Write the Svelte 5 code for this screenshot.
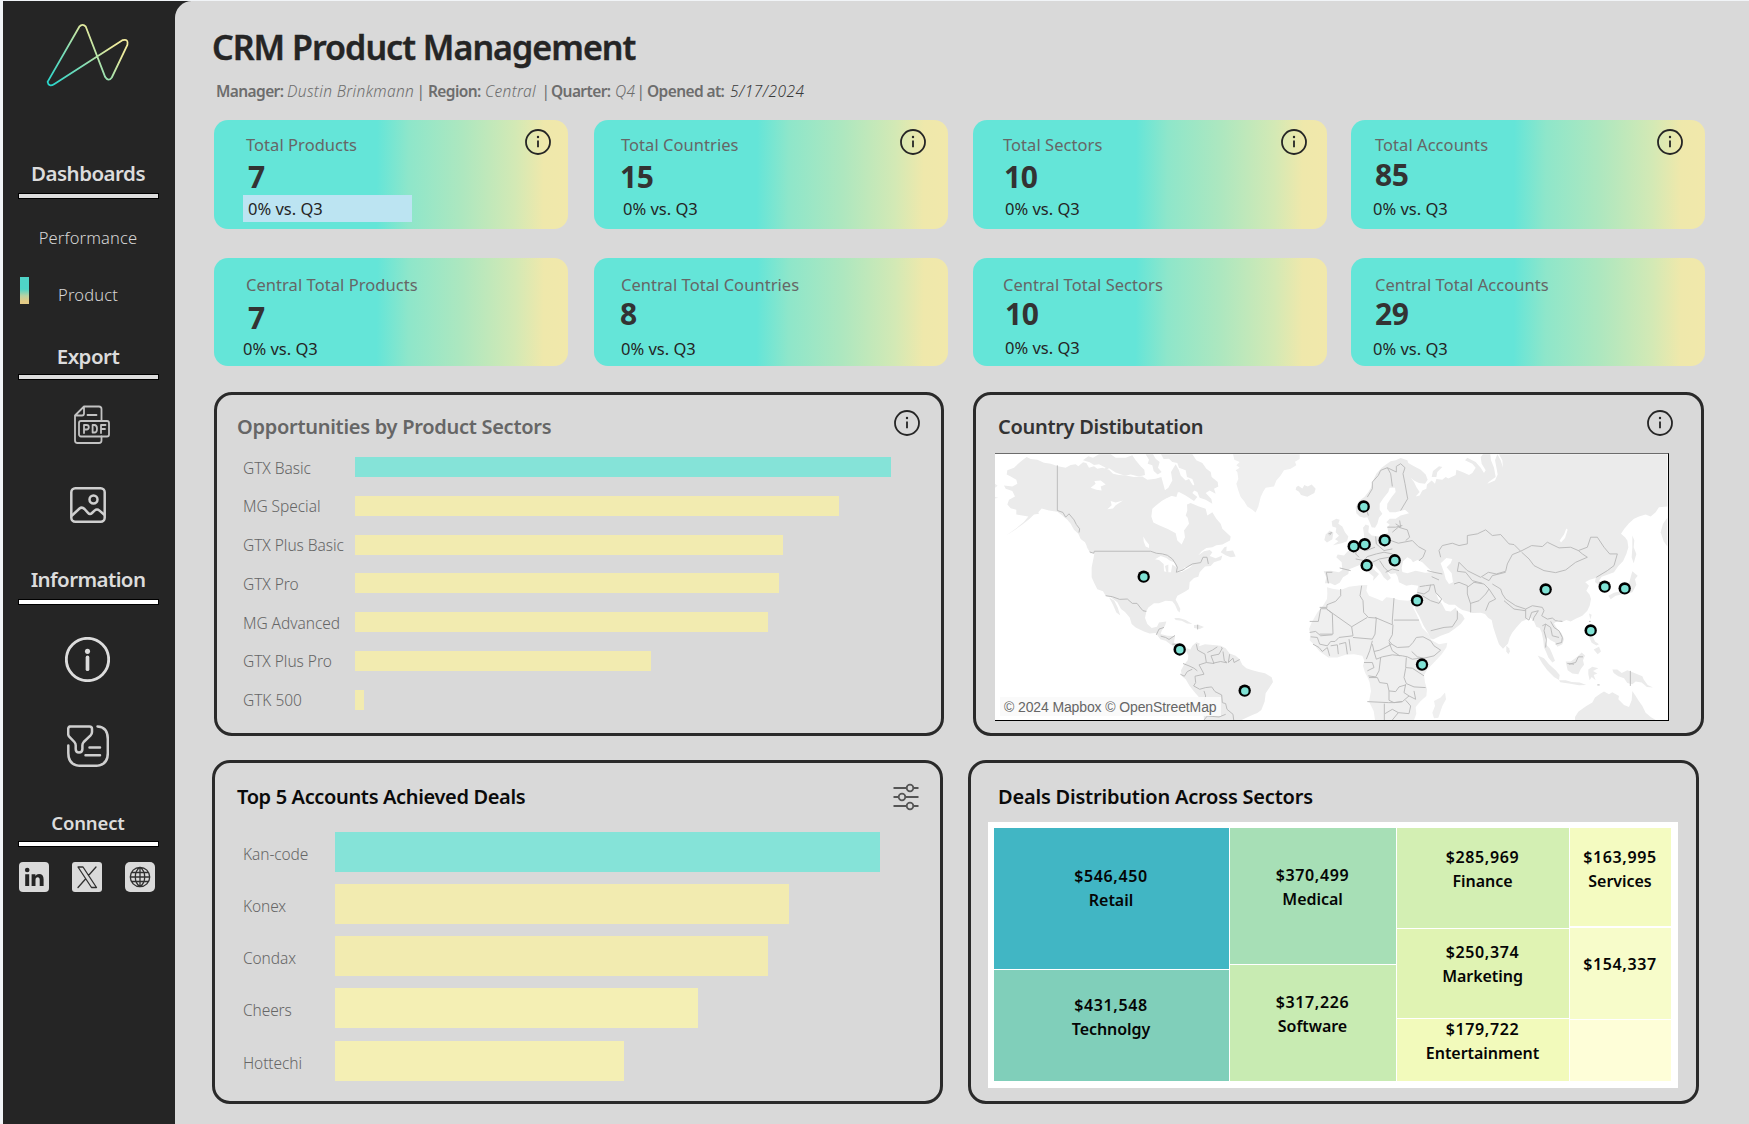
<script>
  const cardRows = [
    [
      { label: 'Total Products', value: '7', picked: true },
      { label: 'Total Countries', value: '15' },
      { label: 'Total Sectors', value: '10' },
      { label: 'Total Accounts', value: '85' }
    ],
    [
      { label: 'Central Total Products', value: '7' },
      { label: 'Central Total Countries', value: '8' },
      { label: 'Central Total Sectors', value: '10' },
      { label: 'Central Total Accounts', value: '29' }
    ]
  ];
  const sectors = [
    ['GTX Basic', 536], ['MG Special', 484], ['GTX Plus Basic', 428], ['GTX Pro', 424],
    ['MG Advanced', 413], ['GTX Plus Pro', 296], ['GTK 500', 9]
  ];
  const accounts = [['Kan-code', 545], ['Konex', 454], ['Condax', 433], ['Cheers', 363], ['Hottechi', 289]];
  const treemap = [
    [{ k: 'retail', v: '$546,450', n: 'Retail' }, { k: 'tech', v: '$431,548', n: 'Technolgy' }],
    [{ k: 'medical', v: '$370,499', n: 'Medical' }, { k: 'software', v: '$317,226', n: 'Software' }],
    [{ k: 'finance', v: '$285,969', n: 'Finance' }, { k: 'marketing', v: '$250,374', n: 'Marketing' }, { k: 'fun', v: '$179,722', n: 'Entertainment' }],
    [{ k: 'services', v: '$163,995', n: 'Services' }, { k: 'other', v: '$154,337', n: '' }, { k: 'rest', v: '', n: '' }]
  ];

  // Map geometry, in the units of the map's viewBox.
  const land = [
    'M145,270L165,262 180,248 190,240 203,230 215,236 235,238 255,247 275,250 297,258 320,262 335,254 350,252 358,258 372,246 382,248 390,262 405,258 415,265 430,262 450,268 462,280 480,284 500,285 525,290 550,288 565,298 590,295 607,290 612,308 618,330 628,322 640,300 636,275 650,252 660,270 665,285 680,300 690,296 700,312 712,322 700,338 715,350 705,362 680,345 660,335 640,345 625,352 608,362 590,376 580,385 577,408 583,426 600,434 628,446 650,458 655,480 668,492 678,470 675,450 690,430 686,412 680,405 685,390 684,372 695,368 720,378 740,385 745,405 760,395 772,415 785,430 790,445 806,460 815,468 813,480 790,492 772,494 760,500 742,502 728,512 718,524 735,512 752,508 760,515 752,526 770,533 790,525 786,538 765,545 755,556 738,558 722,575 718,588 705,592 692,605 690,625 680,632 665,640 655,645 650,657 656,668 664,685 662,695 656,690 648,672 640,662 620,660 600,668 585,668 568,680 562,692 558,712 565,730 578,742 594,738 600,725 622,722 618,735 608,750 605,760 625,765 648,766 645,785 655,800 668,806 684,802 694,806 685,812 672,808 655,812 640,795 620,780 604,775 590,757 572,758 555,752 530,740 518,730 512,710 498,694 486,685 475,665 455,650 440,645 432,632 415,626 406,608 398,590 398,560 403,535 406,520 395,512 385,500 378,485 365,475 358,460 345,448 335,430 325,418 310,405 295,394 270,390 248,384 238,395 240,400 225,402 212,415 190,432 165,450 140,466 170,445 195,424 208,408 190,405 172,402 172,388 155,383 145,372 150,358 168,348 160,332 140,325 135,315 160,318 175,310 172,298 155,288 143,282Z',
    'M450,650L466,660 476,680 484,704 472,695 462,672Z',
    'M372,240L388,228 402,232 420,222 455,222 470,232 500,232 520,225 530,240 545,258 556,268 558,284 540,288 515,282 498,286 470,276 450,264 440,270 448,284 428,274 440,262 420,252 405,254 392,246Z',
    'M560,222L582,222 590,235 602,245 597,262 608,275 596,282 584,272 580,255 566,250 570,238Z',
    'M606,222L700,222 712,240 730,248 742,265 755,275 758,290 776,305 778,318 765,325 770,340 752,330 740,338 757,356 760,370 740,358 722,352 715,335 695,325 706,312 700,296 684,290 680,270 660,262 655,248 640,245 630,235 614,236Z',
    'M616,330L632,322 640,335 656,338 652,350 636,346 625,352Z',
    'M785,515L796,500 803,498 802,512 822,510 830,528 815,530 800,524Z',
    'M382,497L392,505 402,518 394,518Z',
    'M646,712L660,712 680,718 700,730 684,728 668,720 650,718Z',
    'M705,733L718,732 735,739 722,745 705,742Z',
    'M1012,320L1018,316 1030,324 1036,314 1046,318 1058,312 1070,325 1066,338 1045,349 1026,344 1020,334 1010,328Z',
    'M682,812L694,806 700,795 712,784 722,788 720,796 738,790 770,793 785,795 800,802 812,818 830,825 842,835 850,852 862,862 880,868 900,873 918,877 938,889 942,903 930,922 920,937 917,962 907,987 895,996 880,1002 862,1010 848,1017 735,1017 732,980 725,955 705,932 692,915 680,895 668,885 666,868 676,850 686,838 688,825Z'
  ];
  const greenland = 'M822,222L1022,222 1022,236 1008,244 1012,255 995,265 975,270 965,285 952,300 945,318 920,322 912,335 905,350 898,378 890,396 880,388 865,378 855,362 845,350 838,330 832,310 838,296 835,275 830,270 842,262 832,255 842,245 826,238Z';
  const eurasia = [
    'M195,412L182,408 172,398 170,380 180,362 196,350 208,335 217,320 222,300 232,280 248,262 262,252 275,243 290,240 305,233 325,240 328,248 345,258 365,268 380,282 386,298 378,310 360,308 345,300 335,292 345,305 352,320 362,335 350,348 362,345 370,330 382,325 384,312 398,300 408,310 412,296 430,298 440,290 448,294 470,284 472,268 490,275 510,284 520,278 530,262 520,250 498,240 505,232 530,245 545,262 555,278 560,270 548,250 545,230 552,222 574,222 576,240 585,262 590,290 570,304 565,310 588,300 596,282 592,260 588,240 595,222 605,240 612,262 610,240 600,222 1105,222 1105,378 1080,380 1070,395 1055,408 1040,402 1020,408 1005,415 990,428 976,445 966,460 978,470 985,480 988,500 982,520 972,542 958,556 945,575 925,582 908,588 900,600 918,612 925,630 910,634 902,625 898,612 888,604 890,592 872,597 858,605 852,598 870,615 862,630 872,642 876,655 872,675 865,690 850,705 830,714 815,722 802,718 790,724 778,718 765,728 775,745 788,758 795,775 790,790 775,798 768,785 755,778 745,770 738,778 742,792 752,802 758,815 768,840 760,845 748,830 742,815 735,800 733,780 728,755 722,742 712,738 705,722 695,712 685,715 668,722 652,740 640,755 632,770 627,788 612,804 600,790 592,768 583,740 578,718 568,712 558,700 545,696 520,697 508,692 490,688 478,680 468,672 450,672 435,665 425,650 412,640 418,655 428,668 440,690 455,692 470,680 475,692 490,702 497,714 485,730 470,742 450,756 425,765 402,776 394,772 388,758 374,735 360,705 350,688 344,668 352,650 354,630 358,615 338,612 322,615 300,605 296,588 290,578 275,580 265,572 262,560 268,580 276,592 266,600 254,590 245,575 232,560 218,545 207,534 200,538 212,555 230,572 240,580 232,590 222,600 224,588 210,576 198,562 188,550 178,555 160,562 150,566 148,580 132,590 122,606 108,614 95,608 78,608 82,590 74,572 95,570 120,575 130,568 128,545 112,530 116,522 135,525 146,512 158,508 170,495 182,486 196,478 195,462 192,442 200,432 210,436 208,455 218,465 240,468 256,462 268,455 265,440 272,432 262,425 272,415 290,415 305,405 330,398 318,388 290,395 272,395 264,385 265,370 278,350 290,335 288,322 272,322 268,335 252,355 242,370 242,388 250,400 240,412 235,430 228,442 218,440 212,425 205,410Z',
    'M98,422L112,415 122,418 118,430 130,438 138,455 148,468 144,482 128,488 102,494 118,482 108,476 120,466 110,455 112,442 100,438Z',
    'M80,462L92,450 103,456 100,476 84,486 76,478Z',
    'M398,290L402,272 420,258 430,260 415,275 412,290Z',
    'M622,795L630,802 633,812 628,820 622,812Z',
    'M716,824L735,832 750,850 770,868 782,882 780,897 765,888 745,868 730,848Z',
    'M780,898L800,898 818,903 842,905 862,912 840,913 810,908 784,904Z',
    'M800,842L815,842 835,828 848,815 858,824 852,838 855,852 845,865 838,880 820,878 806,868Z',
    'M868,866L880,858 898,862 882,870 895,878 884,882 890,898 878,888 872,898 868,880Z',
    'M940,866L955,866 968,876 985,868 1010,878 1030,886 1034,896 1046,912 1062,920 1044,918 1028,905 1010,902 1000,910 985,906 975,892 958,886 944,876Z',
    'M870,768L882,768 888,782 900,790 892,794 878,786Z',
    'M884,806L900,798 906,812 896,820Z',
    'M870,698L878,702 874,716Z',
    'M1000,572L1016,585 1008,596 1012,612 1000,635 975,640 950,645 935,656 928,645 945,636 965,632 985,618 992,600Z',
    'M1000,465L1006,480 1004,500 1012,520 1004,548 998,530 1000,500Z',
    'M1105,412L1105,498 1094,482 1085,455 1092,430Z',
    'M828,1008L838,992 862,975 880,965 888,950 905,938 915,932 930,940 940,934 960,945 958,955 975,972 990,978 998,958 1000,930 1010,945 1018,958 1030,975 1040,995 1055,1008 1070,1017 828,1017Z'
  ];
  const africa = [
    'M84,620L100,624 125,628 150,618 185,614 205,613 202,630 210,645 235,655 250,662 262,650 280,652 300,658 325,660 345,658 348,672 342,680 352,700 362,722 370,742 388,760 398,778 420,790 445,786 442,800 428,820 405,845 385,865 375,882 378,905 384,925 382,945 365,960 350,978 352,998 345,1017 228,1017 224,990 210,962 216,930 212,905 206,890 198,875 192,855 196,840 190,825 165,820 140,822 115,830 88,830 62,812 48,795 32,778 34,760 30,745 38,725 55,695 72,675 84,655 85,638Z',
    'M438,935L441,955 430,975 418,1010 405,1012 400,995 408,975 405,960 425,950Z'
  ];
  const water = [
    'M395,322L410,310 406,302 425,300 440,312 425,318 428,330 412,328Z',
    'M445,386L458,374 455,362 470,366 492,360 470,374 462,384Z',
    'M553,468L560,480 570,492 570,502 560,498 554,482Z',
    'M588,536L605,526 622,532 632,540 645,545 652,560 640,552 636,575 628,575 628,552 618,556 622,574 615,572 614,550 600,538Z',
    'M650,575L672,568 676,560 700,555 690,562 668,574Z',
    'M1328,562L1332,542 1345,530 1356,536 1362,545 1375,538 1390,545 1405,560 1422,575 1398,576 1370,570 1345,578 1330,574Z',
    'M1445,548L1462,532 1480,535 1475,548 1463,560 1478,578 1482,605 1470,610 1460,595 1455,575Z',
    'M1802,480L1815,462 1822,444 1826,448 1818,472 1806,486Z'
  ];
  const borders = [
    'M295,255V390L312,396 320,410 330,400 345,418 352,432 362,445 360,456',
    'M392,514L404,518 406,512H575L592,518 610,520 625,524 640,535 650,550 655,560 652,575 672,568 680,562 700,550 725,546 732,530 744,530 748,550',
    'M440,645L460,648 482,656 505,655 520,668 534,668 545,682 552,690 562,692',
    'M592,762L600,745 615,740 M605,766L620,770 630,776 648,764 M640,790L655,790 M716,732V746',
    'M712,790L716,808 738,820 742,845 765,848 756,825 780,820 790,802 786,800 M792,812L796,840 804,845 M812,820L808,845 822,832 825,845 842,836 M762,847L785,842 804,846 M742,845L720,852 730,870 735,880 708,886 710,905 704,915 722,925 740,920 758,918 768,932 788,942 790,965 800,968 804,985 822,1000 824,1017 M672,848L690,855 705,862 715,870 M664,880L676,886 685,872 700,865 M735,930L740,945 735,962 M735,1017L745,1005 780,1008 800,1000 M745,815L760,808 775,798',
    'M1082,680H1102 M1145,625V645L1130,662 1104,672 1103,684H1085L1078,722H1052 M1104,686L1178,738 1225,710 M1120,698L1122,760H1082 M1052,755L1070,752 1085,765 1120,762 M1102,684L1120,698 M1178,738L1182,765 1140,770 1128,782 1115,782 1105,795 1082,790 1075,770 1055,768 M1062,790L1080,800 1090,812 1105,800 1112,825 M1115,795L1135,792 1138,820 M1140,790L1160,785 1165,820 M1170,775L1175,810 M1182,770L1240,775 1248,760 1252,712 1228,710 1214,695 1212,660 1203,645 1208,615 M1248,710L1300,732V718L1305,652 M1305,718H1380 M1302,732L1300,762 1290,780 1298,790 1278,800 1262,808 1245,812 1240,790 M1240,780L1232,810 1222,835 M1245,812L1252,835 1270,828 1300,822 1330,825 1345,828 M1298,790L1315,800 1350,798 1362,785 M1290,785L1300,810 1322,825 M1362,785L1372,770 1392,768 1415,780 1425,795 1445,808 1425,825 1395,832 1375,828 1358,812 M1385,832L1390,850 M1345,828L1360,835 1385,832 M1342,830L1340,860 1360,862 1395,885 M1340,862L1335,890 1342,908 1365,918 1400,920 M1215,845H1240L1245,860 1225,870 M1228,885L1250,888 1260,870 1265,830 M1230,890H1255L1262,905 1285,908 1290,930 1310,932 1320,918 1340,912 M1340,910L1335,935 1350,945 1370,955 1365,930 M1290,930V958L1305,965 1330,962 1350,945 M1225,962L1288,965 1305,965 1330,962 M1276,1017V968 M1278,998L1300,985 1318,995 1350,998 1355,975 1340,958 M1300,1017L1318,995',
    'M1228,405L1222,385 M1225,350L1240,325 1240,305 1258,285 1265,270 1285,262 1295,280 1300,318 M1285,262L1312,275 1312,258 1325,250 1338,262 1332,280 1338,310 1346,355 1325,390 M1310,430L1325,440 1322,420 M1285,440H1310L1330,435 M1300,455L1318,440 1345,448 1352,470 1340,480 M1290,478L1318,488 1360,480 1378,498 1400,510 1392,530 1380,540 M1250,468L1252,490 1275,510 1300,505 M1215,480L1205,500 1222,510 1248,500 M1190,535L1215,540 1225,528 1252,520 1275,515 1300,520 M1240,545L1262,535 1290,530 M1262,540L1275,560 1290,575 M1280,575L1300,565 1320,570 M1120,575H1102L1108,608 M1142,562L1175,570 M1195,498L1190,520 1200,530',
    'M1445,530L1440,510 1450,495 1480,488 1500,495 1525,490 1525,465 1555,460 1580,448 1600,465 1625,462 1650,490 1665,492 1685,512 1660,522 1645,550 1640,572 1612,580 1588,575 1565,590 1545,580 1525,570 1500,545 1495,572 1520,575 1540,600 1570,608 M1570,590L1590,600 1600,585 1640,575 M1685,512L1718,495 1750,498 1765,485 1800,502 1835,500 1858,510 1870,520 1885,530 1850,545 1820,568 1790,576 1755,570 1725,555 1710,535 1688,515 M1858,510L1885,500 1895,470 1915,470 1935,500 1952,520 1975,520 1965,555 1945,570 1912,590 M1485,610L1500,605 1525,615 1525,640 1535,670 1535,695 M1525,620L1545,605 1575,610 1590,625 1580,640 1560,660 1535,668 M1590,625L1600,640 1610,655 1590,665 1580,690 M1600,610L1625,625 1630,640 1640,655 1670,675 1700,685 1720,675 1750,680 M1635,660L1665,685 1700,690 M1700,685V712L1710,718 1718,695 1738,690 1725,710 1722,720 M1750,680L1755,690 1748,705 1765,715 1780,712 1790,720 1810,722 M1775,722L1785,740 1800,750 1810,770 1808,785 1790,790 M1760,730L1755,750 1762,775 1760,800 M1750,735L1760,730 1775,740 1780,765 1800,770 M1382,618L1400,615 1425,612 1430,635 1448,655 1440,668 1415,660 1390,645 M1375,635L1395,640 1410,630 1415,612 M1405,570L1425,575 1450,580 M1418,588L1440,598 M1495,690V715L1480,738 1455,740 1415,750 M1375,670L1382,655 M1830,850L1850,845 1858,828H1872 M2014,870V915 M1915,912H1922 M1825,848L1845,850 M1890,722H1895',
    'M1108,460L1118,456 1112,464'
  ];
  const pins = [
    [1214, 378], [1184, 497], [1217, 491], [1223, 554], [554, 588], [662, 806], [857, 929],
    [1277, 479], [1307, 539], [1374, 659], [1389, 851], [1760, 626], [1937, 618], [1997, 623], [1895, 749]
  ];
</script>

{#snippet info(cls)}
  <svg class="info {cls}" viewBox="0 0 28 28">
    <circle cx="14" cy="14" r="12" />
    <path d="M14 12.6v6.6" />
    <circle class="dot" cx="14" cy="9" r="1.2" />
  </svg>
{/snippet}

<div class="page">
  <nav>
    <svg class="logo" viewBox="3 1 173 100">
      <defs>
        <linearGradient id="lg" gradientUnits="userSpaceOnUse" x1="52" y1="88" x2="112" y2="24">
          <stop offset="0" stop-color="#25d5cb" />
          <stop offset="0.4" stop-color="#7addb8" />
          <stop offset="0.8" stop-color="#e8ea9c" />
          <stop offset="1" stop-color="#f6eea0" />
        </linearGradient>
      </defs>
      <path d="M80.3 26.7Q83.6 22.9 86.8 26.7L106.2 77.1Q109.4 82.1 112.8 77.500L128.4 44.9Q129.6 38.500 123.8 40.1L55.4 83.9Q49.6 87.500 48.6 81.9Z" />
    </svg>
    <h2>Dashboards</h2>
    <hr class="soft" />
    <p class="perf">Performance</p>
    <p class="prod"><i></i>Product</p>
    <h2 class="export">Export</h2>
    <hr class="soft" />
    <svg class="pdf" viewBox="0 0 36 38">
      <path d="M27.5 15V3.5Q27.5 1 25 1H10L1 10V35Q1 37.500 3.500 37.500H25Q27.500 37.500 27.500 35V31M10 1V8Q10 10 8 10H1M13.500 9.500H22.500" />
      <rect x="5" y="15.500" width="30" height="15.500" rx="2" />
      <path d="M10 27.500V19.500H12.500Q14.800 19.500 14.800 21.800 14.800 24 12.500 24H10M18.600 19.500V27H20.300Q23 27 23 23.200 23 19.500 20.300 19.500ZM27 27.500V19.500H31.500M27 23.500H31" />
    </svg>
    <svg class="image" viewBox="0 0 36 36">
      <rect x="1.300" y="1.300" width="33.400" height="33.400" rx="4" />
      <circle cx="23.500" cy="12.500" r="4" />
      <path d="M2 28.500L9.500 21.500Q12 19.500 14.500 22L18 25.800Q20 28 22 26L24.500 23.600Q27 21.500 29.500 23.600L34 27.500" />
    </svg>
    <h2 class="information">Information</h2>
    <hr />
    <svg class="help" viewBox="0 0 44 44">
      <circle cx="22" cy="22" r="20.700" />
      <path d="M22 20V31.500" />
      <circle class="dot" cx="22" cy="14" r="2.500" />
    </svg>
    <svg class="filter" viewBox="0 0 42 42">
      <path d="M2.500 1.500H22.500Q25 1.500 25 4V7Q25 9 23.600 10.400L16.700 17Q15.400 18.400 15.400 20.300V24Q15.400 27.500 12 27.500 8.700 27.500 8.700 24V20.300Q8.700 18.400 7.400 17L2.200 11.600Q1.200 10.600 1.200 9V4Q1.200 1.500 3.700 1.500M30.500 1.500Q40.800 2 40.800 14V28Q40.800 40.800 28 40.800H14Q1.300 40.800 1.300 28V20.500M22.500 22.500H33M18.500 30.300H33" />
    </svg>
    <h2 class="connect">Connect</h2>
    <hr />
    <div class="social">
      <svg viewBox="0 0 30 30">
        <rect class="tile" width="30" height="30" rx="4" />
        <circle class="ink" cx="8.200" cy="8" r="2.300" />
        <path class="ink" d="M6.200 12.300H10.200V24H6.200ZM12.600 12.300H16.400V13.900Q17.500 12 20 12 24.600 12 24.600 17.200V24H20.700V18Q20.700 15.200 18.700 15.200 16.500 15.200 16.500 18V24H12.600Z" />
      </svg>
      <svg viewBox="0 0 30 30">
        <rect class="tile" width="30" height="30" rx="3" />
        <path class="line" d="M6 5H11L24.500 25.500H19.500ZM24 5L16.500 13.500M13.500 17L6 25.500" />
      </svg>
      <svg viewBox="0 0 30 30">
        <rect class="tile" width="30" height="30" rx="5" />
        <path class="line" d="M15 5.300A9.600 9.600 0 1 0 15 24.700 9.600 9.600 0 1 0 15 5.300ZM15 5.300V24.700M5.300 15H24.700M6.800 10.500H23.200M6.800 19.500H23.200M15 5.300Q10.300 8.500 10.300 15T15 24.700M15 5.300Q19.700 8.500 19.700 15T15 24.700" />
      </svg>
    </div>
  </nav>

  <main>
    <h1>CRM Product Management</h1>
    <div class="meta">
      <b>Manager:</b><em>Dustin Brinkmann</em><span>|</span>
      <b>Region:</b><em>Central</em><span>|</span>
      <b>Quarter:</b><em>Q4</em><span>|</span>
      <b>Opened at:</b><em class="date">5/17/2024</em>
    </div>

    {#each cardRows as cards, r}
      <div class="cards" class:central={r === 1}>
        {#each cards as c}
          <div class="cell">
            <div class="card">
              <span class="label">{c.label}</span>
              <strong>{c.value}</strong>
              <span class="delta" class:picked={c.picked}>0% vs. Q3</span>
              {#if r === 0}{@render info('corner')}{/if}
            </div>
          </div>
        {/each}
      </div>
    {/each}

    <div class="panels">
      <section class="panel sectors">
        <header><h3 class="muted">Opportunities by Product Sectors</h3>{@render info('head')}</header>
        <div class="bars thin">
          {#each sectors as [name, w], i}
            <div class="row"><span>{name}</span><i class:lead={i === 0} style="width:{w}px"></i></div>
          {/each}
        </div>
      </section>

      <section class="panel country">
        <header><h3 class="dark">Country Distibutation</h3>{@render info('head')}</header>
        <div class="map">
          <svg viewBox="108 221 2019 796" preserveAspectRatio="none">
            <g class="land">
              {#each land as d}<path {d} />{/each}
              <path class="pale" d={greenland} />
              <g transform="translate(1020 0)">
                {#each eurasia as d}<path {d} />{/each}
                {#each africa as d}<path class="pale" {d} />{/each}
              </g>
              <path class="pale" d="M108,310L116,316 108,322ZM108,350L118,352 108,354Z" />
            </g>
            <g class="water">{#each water as d}<path {d} />{/each}</g>
            <g class="borders">{#each borders as d}<path {d} />{/each}</g>
            {#each pins as [x, y]}
              <circle class="ring" cx={x} cy={y} r="18.500" />
              <circle class="pin" cx={x + 0.5} cy={y + 1} r="11.300" />
            {/each}
          </svg>
          <span class="credit">© 2024 Mapbox © OpenStreetMap</span>
        </div>
      </section>
    </div>

    <div class="panels second">
      <section class="panel accounts">
        <header>
          <h3>Top 5 Accounts Achieved Deals</h3>
          <svg class="sliders" viewBox="0 0 26 28">
            <path d="M0.500 5H13.500M20.500 5H25.500M0.500 14H5.500M12.500 14H25.500M0.500 23H13.500M20.500 23H25.500" />
            <circle cx="17" cy="5" r="3.300" /><circle cx="9" cy="14" r="3.300" /><circle cx="17" cy="23" r="3.300" />
          </svg>
        </header>
        <div class="bars thick">
          {#each accounts as [name, w], i}
            <div class="row"><span>{name}</span><i class:lead={i === 0} style="width:{w}px"></i></div>
          {/each}
        </div>
      </section>

      <section class="panel deals">
        <header><h3>Deals Distribution Across Sectors</h3></header>
        <div class="tree">
          {#each treemap as col}
            <div class="col">
              {#each col as t}
                <div class="tile {t.k}"><b>{t.v}</b><span>{t.n}</span></div>
              {/each}
            </div>
          {/each}
        </div>
      </section>
    </div>
  </main>
</div>

<style>
  :global(body) { background: #f1f4f7; }
  :global(*) { box-sizing: border-box; }
  .page {
    width: 1749px; height: 1124px; padding: 1px 0 0 3px; display: flex; overflow: hidden;
    font-family: 'Noto Sans', 'Open Sans', sans-serif; color: #252525;
  }
  h1, h2, h3, p { margin: 0; }

  nav {
    width: 188px; margin-right: -16px; padding-right: 18px; background: #252525; flex: none;
    display: flex; flex-direction: column; align-items: center; color: #dcdcdc;
  }
  nav > * { flex: none; }
  nav svg { fill: none; stroke: #cfcfcf; stroke-linecap: round; stroke-linejoin: round; display: block; }
  .logo { width: 173px; height: 100px; }
  nav .logo { stroke: url(#lg); stroke-width: 1.8; margin-bottom: 55.500px; }
  h2 { font-weight: 600; font-size: 20.5px; line-height: 32px; letter-spacing: -0.5px; }
  hr { width: 141px; height: 6px; margin: 4px 0 0; border: 1px solid #000; background: #fff; }
  hr.soft { background: #dcdcdc; margin-top: 4.500px; }
  nav p { width: 100%; text-align: center; font-weight: 300; font-size: 16.5px; line-height: 30px; letter-spacing: 0.15px; color: #d6d6d6; }
  .perf { padding-top: 24px; }
  .prod { margin-top: 27px; display: grid; grid-template-columns: 17px 9px 1fr 26px; }
  .prod i { grid-column: 2; height: 27px; margin-top: -3px; margin-left: -0.500px; background: linear-gradient(#4fd3c7 45%, #b9d2a2 70%, #e4cb86 90%); }
  .export { margin-top: 29.500px; }
  .export + hr.soft { margin-top: 2.500px; }
  nav .pdf { width: 36px; height: 39px; margin: 25px 0 0 7px; stroke-width: 1.8; stroke: #c2c2c2; }
  nav .image { width: 36px; height: 36px; margin: 43px 0 0 0; stroke-width: 2.5; }
  .information { margin-top: 40px; letter-spacing: -0.6px; }
  nav .help { width: 45px; height: 45px; margin: 32px 1px 0 0; stroke-width: 2.8; stroke: #dcdcdc; }
  nav .help path { stroke-width: 3.6; }
  nav .help .dot { fill: #dcdcdc; stroke: none; }
  nav .filter { width: 42px; height: 42px; margin: 43px 0 0 0; stroke-width: 2.5; }
  h2.connect { margin-top: 40px; font-size: 18.5px; letter-spacing: -0.15px; }
  .connect + hr { margin-top: 2px; }
  .social { display: flex; gap: 23px; margin: 15px 2px 0 0; }
  .social svg { width: 30px; height: 30px; }
  .social .tile { fill: #dadada; stroke: none; }
  .social .ink { fill: #252525; stroke: none; }
  .social .line { stroke: #303030; stroke-width: 1.3; }

  main { flex: 1; background: #d9d9d9; border-radius: 17px 0 0 0; padding: 24px 0 0 39px; position: relative; }
  h1 { margin-left: -2px; font-weight: 600; font-size: 34px; line-height: 45px; letter-spacing: -0.98px; color: #252525; -webkit-text-stroke: 0.4px #252525; }
  .meta {
    display: grid; grid-template-columns: 71px 131px 10px 57px 58px 8px 64px 23px 9px 83px auto;
    margin: 9px 0 17px 2px; font-size: 15.5px; line-height: 24px; color: #6d6d6d; white-space: nowrap;
  }
  .meta b { font-weight: 600; letter-spacing: -0.6px; }
  .meta em { font-weight: 300; letter-spacing: 0.35px; }
  .meta span { margin-left: -1.500px; }
  .meta .date { color: #3a3a3a; letter-spacing: 0.5px; }

  .cards { display: grid; grid-template-columns: 380px 379px 378px 354px; height: 138px; }
  .cards.central { height: 134px; }
  .card {
    width: 354px; height: 109px; border-radius: 14px; padding: 14px 0 7px 32px;
    background: linear-gradient(90.5deg, #64e5d8 0 46%, #8ee6ca 55%, #ade7bf 70%, #d3e9b5 85%, #efe8ab 93%, #f1e8ab);
    display: flex; flex-direction: column; align-items: flex-start; position: relative;
    --ly: 0px; --nx: 2px; --dx: 3px; --ny: 5px;
  }
  .central .card { height: 108px; --ly: 2px; --dx: -3px; --ny: 6px; padding-bottom: 4px; }
  .label { margin-top: var(--ly); font-size: 16.5px; line-height: 22px; letter-spacing: 0.05px; color: #666; }
  strong { height: 32px; margin: var(--ny) 0 0 var(--nx); font-weight: 700; font-size: 30px; line-height: 32px; letter-spacing: -0.3px; color: #333; }
  .delta { margin: auto 0 0 var(--dx); font-size: 16.5px; line-height: 27px; height: 27px; color: #252525; }
  .delta.picked { width: 169px; margin-left: -3px; padding-left: 5px; background: #bce4f2; }
  .cell:nth-child(2) .card { padding-left: 27px; --dx: 2px; --nx: -1px; }
  .central .cell:nth-child(2) .card { --dx: 0px; --ny: 2px; --nx: -1px; }
  .cell:nth-child(3) .card { padding-left: 30px; --dx: 2px; --nx: 1px; }
  .central .cell:nth-child(3) .card { --ny: 1.500px; --nx: 2px; padding-bottom: 5px; }
  .cell:nth-child(4) .card { padding-left: 24px; --dx: -2px; --ny: 3px; --nx: 0px; }
  .central .cell:nth-child(4) .card { --ny: 1.500px; --nx: 0px; }
  .info { width: 28px; height: 28px; fill: none; stroke: #252525; stroke-width: 1.8; display: block; flex: none; }
  .info .dot { fill: #252525; stroke: none; }
  .corner { position: absolute; top: 8px; right: 16px; }
  .cell:nth-child(2) .corner { right: 21px; }
  .cell:nth-child(3) .corner { right: 19px; }
  .cell:nth-child(4) .corner { right: 21px; }

  .panels { display: flex; gap: 29px; height: 344px; }
  .panel { border: 3px solid #2a2a2a; border-radius: 18px; height: 344px; flex: none; }
  .sectors { width: 730px; }
  .country { width: 731px; }
  .second { margin: 23.5px 0 0 -2px; gap: 25px; }
  .accounts, .deals { width: 731px; }
  .panel header { display: flex; justify-content: space-between; align-items: flex-start; padding: 16.500px 20px 0 20px; height: 60px; }
  h3 { font-weight: 600; font-size: 20px; line-height: 30px; letter-spacing: -0.25px; color: #0a0a0a; }
  h3.muted { color: #666; letter-spacing: -0.28px; }
  h3.dark { color: #333; letter-spacing: -0.3px; }
  .panel.country header { padding: 16.500px 27px 0 22px; }
  .head { margin-top: -3px; }
  .panel.second header, .second .panel header { padding: 19px 21px 0 22px; height: 61px; }
  .second .panel.deals header { padding-left: 27px; }
  .accounts h3 { letter-spacing: -0.35px; }
  .deals h3 { letter-spacing: -0.2px; }
  .sliders { width: 26px; height: 28px; margin-top: 1px; fill: none; stroke: #555; stroke-width: 1.8; }

  .row { display: flex; align-items: flex-start; }
  .row span { font-weight: 300; font-size: 15.5px; line-height: 24px; color: #666; white-space: nowrap; flex: none; }
  .row i { background: #f2ebb0; flex: none; }
  .row i.lead { background: #85e3d8; }
  .bars { padding-left: 26px; }
  .thin { padding-top: 2px; }
  .thin .row { height: 38.800px; }
  .thin span { width: 112px; margin-top: -1.500px; letter-spacing: -0.05px; }
  .thin i { height: 20px; }
  .thick { padding: 8px 0 0 28px; }
  .thick .row { height: 52.300px; }
  .thick span { width: 92px; margin-top: 10px; letter-spacing: -0.1px; }
  .thick i { height: 40px; }
  .thick .row:nth-child(n + 4) i { background: #f4efb4; }

  .map { width: 674px; height: 268px; margin: -2px 0 0 19px; background: #fff; border: solid #000; border-width: 1px 1px 1px 0; border-top-color: #6c6c6c; position: relative; }
  .map svg { display: block; width: 673px; height: 266px; overflow: hidden; }
  .land path { fill: #ebebeb; }
  .land .pale { fill: #efefef; }
  .water path { fill: #fff; }
  .borders path { fill: none; stroke: #b8b8b8; stroke-width: 2.8; stroke-linejoin: round; }
  .ring { fill: #000; }
  .pin { fill: #7fe2d5; }
  .credit {
    position: absolute; left: 5px; bottom: 4px; height: 19px; padding: 0 4px; background: rgba(250, 250, 250, 0.92);
    font: 14px/20px 'Liberation Sans', Arial, sans-serif; color: #666; white-space: nowrap; letter-spacing: -0.12px;
  }

  .tree {
    width: 690px; height: 266px; margin: -2px 0 0 16.500px; padding: 6px 6px 7px 6px; background: #fff;
    display: grid; grid-template-columns: 235px 166px 172px 101px; gap: 1px;
  }
  .col { display: flex; flex-direction: column; gap: 1px; }
  .col .tile { display: flex; flex-direction: column; align-items: center; font-weight: 600; font-size: 16px; line-height: 24px; color: #050505; letter-spacing: -0.05px; }
  .tile b { font-weight: 600; letter-spacing: 0.6px; }
  .retail { height: 141px; background: #41b6c4; padding-top: 36px; }
  .tech { flex: 1; background: #80cfba; padding-top: 23px; }
  .medical { height: 136px; background: #a7dfb6; padding-top: 35px; }
  .software { flex: 1; background: #c8ebb2; padding-top: 25px; }
  .finance { height: 100px; background: #d3efb3; padding-top: 17px; }
  .marketing { height: 89px; background: #e0f3b3; padding-top: 11px; }
  .fun { flex: 1; background: #f2fabb; }
  .col .fun b { margin-top: -2px; }
  .services { height: 98px; background: #f4fbc1; padding-top: 17px; }
  .other { height: 91px; background: #f7fcca; margin-top: 1px; padding-top: 24px; }
  .rest { flex: 1; background: #fefed8; }
</style>
